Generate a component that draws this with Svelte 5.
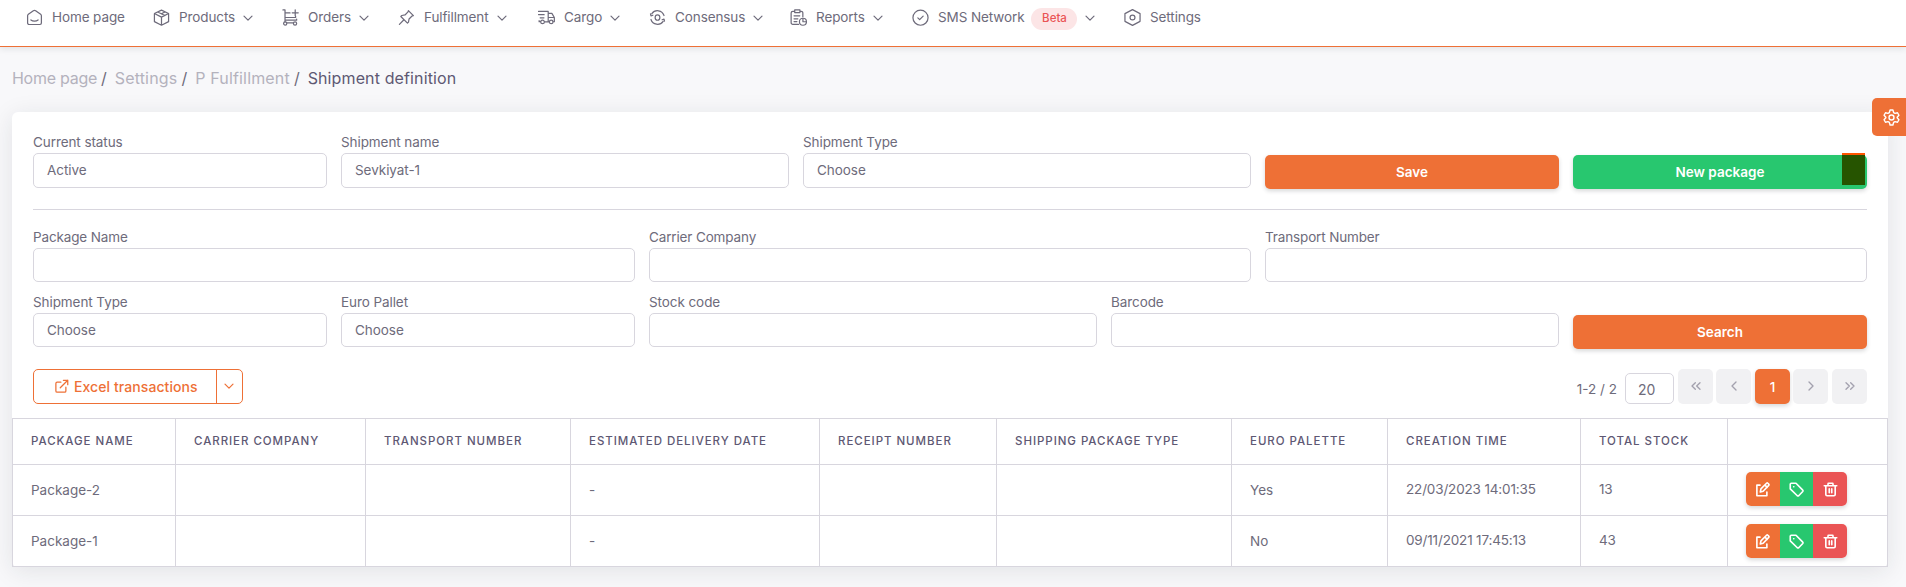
<script>
  const nav = [
    { label: 'Home page', icon: 'home', w: 127 },
    { label: 'Products', icon: 'box', w: 129, more: true },
    { label: 'Orders', icon: 'cart', w: 116, more: true },
    { label: 'Fulfillment', icon: 'pin', w: 140, more: true },
    { label: 'Cargo', icon: 'truck', w: 111, more: true },
    { label: 'Consensus', icon: 'sync', w: 141, more: true },
    { label: 'Reports', icon: 'report', w: 122, more: true },
    { label: 'SMS Network', icon: 'check', w: 212, more: true, badge: 'Beta' },
    { label: 'Settings', icon: 'hex', w: 90 }
  ];
  const crumbs = ['Home page', 'Settings', 'P Fulfillment'];
  const columns = [
    ['Package name', 163], ['Carrier company', 190], ['Transport number', 205],
    ['Estimated delivery date', 249], ['Receipt number', 177], ['Shipping package type', 235],
    ['Euro palette', 156], ['Creation time', 193], ['Total stock', 147], ['', 160]
  ];
  const rows = [
    ['Package-2', '', '', '-', '', '', 'Yes', '22/03/2023 14:01:35', '13'],
    ['Package-1', '', '', '-', '', '', 'No', '09/11/2021 17:45:13', '43']
  ];
</script>

{#snippet icon(name)}
  <svg class="ico" viewBox="0 0 18 18">
    {#if name === 'home'}
      <path d="M1.7 7.2a2 2 0 0 1 .8-1.6L7.8 1.8a2 2 0 0 1 2.4 0l5.3 3.8a2 2 0 0 1 .8 1.6v7.7a1.5 1.5 0 0 1-1.5 1.5H3.2a1.5 1.5 0 0 1-1.5-1.5zM5.2 11.6c2 1.7 5.6 1.7 7.6 0" />
    {:else if name === 'box'}
      <path d="M9 1.2 16.5 4.8v8.6l-7.5 3.8-7.5-3.8V4.8zM1.5 4.8l7.5 3.8 7.5-3.8M9 8.6v8.6M5 3.2l7.6 3.7M8.7 5.1l4-2" />
    {:else if name === 'cart'}
      <path d="M1 1h2.2v12.7M3.2 11.8h12.3v-1M3.2 4.2h5.3M3.2 9h11.2V7.6M14 .8v6.4M10.8 4h6.4" />
      <circle cx="3.4" cy="15.3" r="1.7" /><circle cx="13.8" cy="15.3" r="1.7" /><path d="M5.1 14.6h7" />
    {:else if name === 'pin'}
      <path d="m11 1.7 5.3 5.3-1.4.4-3.2 3.2-.6 3.3-1.1 1.1-7-7 1.1-1.1 3.3-.6 3.2-3.2zM6 11.7l-4.5 4.6" />
    {:else if name === 'truck'}
      <path d="M.5 2.6h10.3v10.8M.5 6h6M2.3 9.3h4M1.2 12.4v1h1.4M7 13.6h5M10.8 4.6h3.9l2.6 4.4v4.5h-1.3M10.8 9h6.5" />
      <circle cx="4.8" cy="13.7" r="1.9" /><circle cx="14" cy="13.7" r="1.9" />
    {:else if name === 'sync'}
      <ellipse cx="9" cy="9" rx="2.5" ry="2.9" />
      <path d="M3 4.9a7.3 7.3 0 0 1 12.9 2M15 13.1a7.3 7.3 0 0 1-12.9-2M1.6 5.2l.5 2.2 2-.8M16.4 12.8l-.5-2.2-2 .8" />
    {:else if name === 'report'}
      <path d="M9 16.3H3a1.8 1.8 0 0 1-1.8-1.8V4.2A1.8 1.8 0 0 1 3 2.4h2M10.6 2.4h1.2a1.8 1.8 0 0 1 1.8 1.8v4M5 1h5.5v2.8H5zM4.3 7.2h6M4.3 10.4h4M4.3 13.3h3" />
      <circle cx="13.7" cy="13.5" r="3.7" /><path d="M13.7 9.8v3.7h3.7" />
    {:else if name === 'check'}
      <circle cx="9" cy="9.2" r="8" /><path d="m6.2 9.4 1.9 1.8 3.7-3.6" />
    {:else if name === 'hex'}
      <path d="M9 .7 17 4.9v8.2L9 17.3 1 13.1V4.9z" /><circle cx="9" cy="9" r="2.6" />
    {/if}
  </svg>
{/snippet}

{#snippet chevron()}
  <svg class="chev" viewBox="0 0 10 7"><path d="m1 1.2 4 4 4-4" /></svg>
{/snippet}

{#snippet field(label, value, span)}
  <label class="field s{span}">
    <span class="lbl">{label}</span>
    <span class="input">{value}</span>
  </label>
{/snippet}

<nav>
  {#each nav as n}
    <a class="item" style="width:{n.w}px">
      {@render icon(n.icon)}
      <span class="txt">{n.label}</span>
      {#if n.badge}<span class="badge">{n.badge}</span>{/if}
      {#if n.more}{@render chevron()}{/if}
    </a>
  {/each}
</nav>

<div class="crumbs">
  {#each crumbs as c}<a>{c}</a><i>/</i>{/each}<b>Shipment definition</b>
</div>

<main>
  <section class="body">
    <div class="row first">
      {@render field('Current status', 'Active', 2)}
      {@render field('Shipment name', 'Sevkiyat-1', 3)}
      {@render field('Shipment Type', 'Choose', 3)}
      <button class="btn s2">Save</button>
      <button class="btn green s2">New package<span class="mark"></span></button>
    </div>
    <hr />
    <div class="row second">
      {@render field('Package Name', '', 4)}
      {@render field('Carrier Company', '', 4)}
      {@render field('Transport Number', '', 4)}
    </div>
    <div class="row third">
      {@render field('Shipment Type', 'Choose', 2)}
      {@render field('Euro Pallet', 'Choose', 2)}
      {@render field('Stock code', '', 3)}
      {@render field('Barcode', '', 3)}
      <button class="btn s2">Search</button>
    </div>
    <div class="tools">
      <div class="excel">
        <span class="main">
          <svg viewBox="0 0 24 24"><path d="M19 13v6a2 2 0 0 1-2 2H5a2 2 0 0 1-2-2V7a2 2 0 0 1 2-2h6M15 2h7v7M10 14 22 2" /></svg>
          Excel transactions
        </span>
        <span class="drop">{@render chevron()}</span>
      </div>
      <div class="pager">
        <span class="count">1-2 / 2</span>
        <span class="size">20</span>
        <span class="pg"><svg viewBox="0 0 24 24"><path d="m11 17-5-5 5-5M18 17l-5-5 5-5" /></svg></span>
        <span class="pg"><svg viewBox="0 0 24 24"><path d="m15 18-6-6 6-6" /></svg></span>
        <span class="pg on">1</span>
        <span class="pg"><svg viewBox="0 0 24 24"><path d="m9 18 6-6-6-6" /></svg></span>
        <span class="pg"><svg viewBox="0 0 24 24"><path d="m13 17 5-5-5-5M6 17l5-5-5-5" /></svg></span>
      </div>
    </div>
  </section>
  <table>
    <colgroup>{#each columns as c}<col style="width:{c[1]}px" />{/each}</colgroup>
    <thead><tr>{#each columns as c}<th>{c[0]}</th>{/each}</tr></thead>
    <tbody>
      {#each rows as r}
        <tr>
          {#each r as cell, i}<td class:stamp={i > 6}>{cell}</td>{/each}
          <td>
            <div class="acts">
              <span class="edit"><svg viewBox="0 0 24 24"><path d="M8 5H3v17h16v-6M8.5 16l1-5L18.5 2a1.5 1.5 0 0 1 2 0l1.5 1.5a1.5 1.5 0 0 1 0 2L13 14.8zM16 5l3.5 3.5" /></svg></span>
              <span class="tag"><svg viewBox="0 0 24 24"><path d="M3.5 2h7.7L22 13a1.8 1.8 0 0 1 0 2.2L15.5 22a1.8 1.8 0 0 1-2.2 0L2 11V3.5A1.5 1.5 0 0 1 3.5 2zM7.5 7.5h.2" /></svg></span>
              <span class="del"><svg viewBox="0 0 24 24"><path d="M2 6h20M4.5 6v14a2 2 0 0 0 2 2h11a2 2 0 0 0 2-2V6M8 6V3a1 1 0 0 1 1-1h6a1 1 0 0 1 1 1v3M10 11v6M14 11v6" /></svg></span>
            </div>
          </td>
        </tr>
      {/each}
    </tbody>
  </table>
</main>

<aside class="gear">
  <svg viewBox="0 0 24 24"><path d="M10 1.5h4l1 3.5 2 1.2 3.5-.9 2 3.5L20 11.5v1l2.5 2.7-2 3.5-3.5-.9L15 19l-1 3.5h-4L9 19l-2-1.2-3.5.9-2-3.5L4 12.500v-1L1.5 8.8l2-3.5 3.5.9L9 5z" /><circle cx="12" cy="12" r="3.5" /></svg>
</aside>

<style>
  :global(body) { background: #f8f8fa; overflow: hidden; }
  :global(#app) {
    font-family: Inter, sans-serif;
    font-size: 13.5px;
    color: #6e6b7b;
    height: 587px;
    overflow: hidden;
  }
  svg { fill: none; stroke: currentColor; stroke-linecap: round; stroke-linejoin: round; flex: none; }
  nav {
    height: 41px;
    padding: 5px 0 0 26px;
    display: flex;
    align-items: flex-start;
    background: #fff;
    border-bottom: 1px solid #ee7036;
    box-shadow: 0 2px 6px rgba(34, 41, 47, .1);
  }
  .item { display: flex; align-items: center; height: 24px; white-space: nowrap; letter-spacing: -.1px; }
  .ico { width: 17px; height: 17px; stroke-width: 1.3; margin-right: 9px; }
  .chev { width: 10px; height: 7px; stroke-width: 1.2; margin: 3px 0 0 8px; }
  .badge {
    margin: 4px 0 0 7px; width: 46px; height: 22px; line-height: 21px; border-radius: 11px;
    text-align: center; background: #fce5e6; color: #ea5455; font-size: 11.5px; font-weight: 500; letter-spacing: 0;
  }
  .crumbs { margin: 21px 0 0 12px; height: 20px; line-height: 20px; font-size: 16px; display: flex; color: #b4b2bd; }
  .crumbs a { letter-spacing: .17px; }
  .crumbs a:first-child { letter-spacing: -.27px; }
  .crumbs i { font-style: normal; color: #6e6b7b; margin: 0 8px 0 4px; }
  .crumbs b { font-weight: 400; color: #5e5873; letter-spacing: .12px; }
  main { margin: 24px 18px 0 12px; background: #fff; border-radius: 6px; box-shadow: 0 4px 24px rgba(34, 41, 47, .1); }
  .body { padding: 0 21px; height: 306px; }
  .row { display: grid; grid-template-columns: repeat(12, 1fr); column-gap: 14px; align-items: end; }
  .first { padding-top: 20px; }
  .second { padding-top: 17px; }
  .third { padding-top: 10px; }
  .s2 { grid-column: span 2; }
  .s3 { grid-column: span 3; }
  .s4 { grid-column: span 4; }
  .field { display: block; }
  .lbl { display: block; height: 21px; line-height: 20px; letter-spacing: -.08px; }
  .second .lbl { letter-spacing: -.14px; }
  .input {
    display: block; box-sizing: border-box; height: 34px; line-height: 32px; padding: 0 13px;
    border: 1px solid #d8d6de; border-radius: 5px; letter-spacing: -.05px;
  }
  .first .input { height: 35px; line-height: 33px; }
  .btn {
    position: relative; height: 34px; border: 0; border-radius: 5px; background: #ee7036; color: #fff;
    font: 600 13.5px Inter, sans-serif; margin: 0 0 -1px; padding: 0; box-shadow: 0 2px 4px rgba(34, 41, 47, .18);
  }
  .third .btn { margin-bottom: -2px; }
  .green { background: #28c76f; }
  .mark { position: absolute; right: 2px; top: -2px; width: 23px; height: 32px; box-sizing: border-box; background: #265400; border-top: 2px solid #ff5500; }
  hr { border: 0; height: 1px; background: #d8d6de; margin: 21px 0 0; }
  .tools { display: flex; justify-content: space-between; margin-top: 22px; }
  .excel { display: flex; box-sizing: border-box; height: 35px; width: 210px; border: 1px solid #ee7036; border-radius: 5px; color: #ee7036; }
  .excel .main { display: flex; align-items: center; width: 183px; padding-left: 20px; box-sizing: border-box; border-right: 1px solid #ee7036; font-weight: 500; font-size: 14px; letter-spacing: .08px; white-space: nowrap; }
  .excel .main svg { width: 15px; height: 15px; stroke-width: 2; margin-right: 5px; }
  .drop { flex: 1; display: flex; justify-content: center; align-items: center; }
  .drop .chev { margin: 0 1px 0 0; }
  .pager { display: flex; }
  .count { padding-top: 12px; margin-right: 8px; line-height: 17px; white-space: nowrap; }
  .size { box-sizing: border-box; width: 49px; height: 31px; margin: 4px 4px 0 0; border: 1px solid #d8d6de; border-radius: 5px; line-height: 32px; padding-left: 12px; font-size: 14px; }
  .pg { width: 35px; height: 35px; border-radius: 5px; background: #f1f1f3; color: #a3a1ae; display: flex; align-items: center; justify-content: center; margin-left: 3px; }
  .pg:nth-child(odd) { margin-left: 4px; }
  .pg:nth-child(3) { margin-left: 0; }
  .pg svg { width: 16px; height: 16px; stroke-width: 2; margin-top: -2px; }
  .pg.on { background: #ee7036; color: #fff; font-weight: 500; box-shadow: 0 2px 4px rgba(34, 41, 47, .18); }
  table { border-collapse: collapse; table-layout: fixed; width: 1876px; }
  th, td { border: 1px solid #d8d6de; padding: 0 0 0 18px; text-align: left; white-space: nowrap; }
  th { height: 43px; padding-bottom: 2px; font-size: 11.5px; font-weight: 500; letter-spacing: .95px; text-transform: uppercase; color: #5e5873; }
  td { height: 50px; }
  .stamp { letter-spacing: -.16px; height: 48px; padding-bottom: 2px; }
  .acts { display: flex; width: 101px; height: 34px; border-radius: 5px; overflow: hidden; color: #fff; box-shadow: 0 2px 4px rgba(34, 41, 47, .18); }
  tr:first-child .acts { margin-top: -2px; }
  .acts span { flex: 1; display: flex; align-items: center; justify-content: center; }
  .acts svg { width: 15px; height: 15px; stroke-width: 2.6; }
  .edit { background: #ee7036; }
  .tag { background: #28c76f; }
  .del { background: #ea5455; }
  .gear { position: absolute; right: 0; top: 98px; width: 34px; height: 38px; border-radius: 5px 0 0 5px; background: #ee7036; color: #fff; display: flex; align-items: center; justify-content: center; }
  .gear svg { width: 17px; height: 17px; stroke-width: 2; margin-left: 4px; }
</style>
